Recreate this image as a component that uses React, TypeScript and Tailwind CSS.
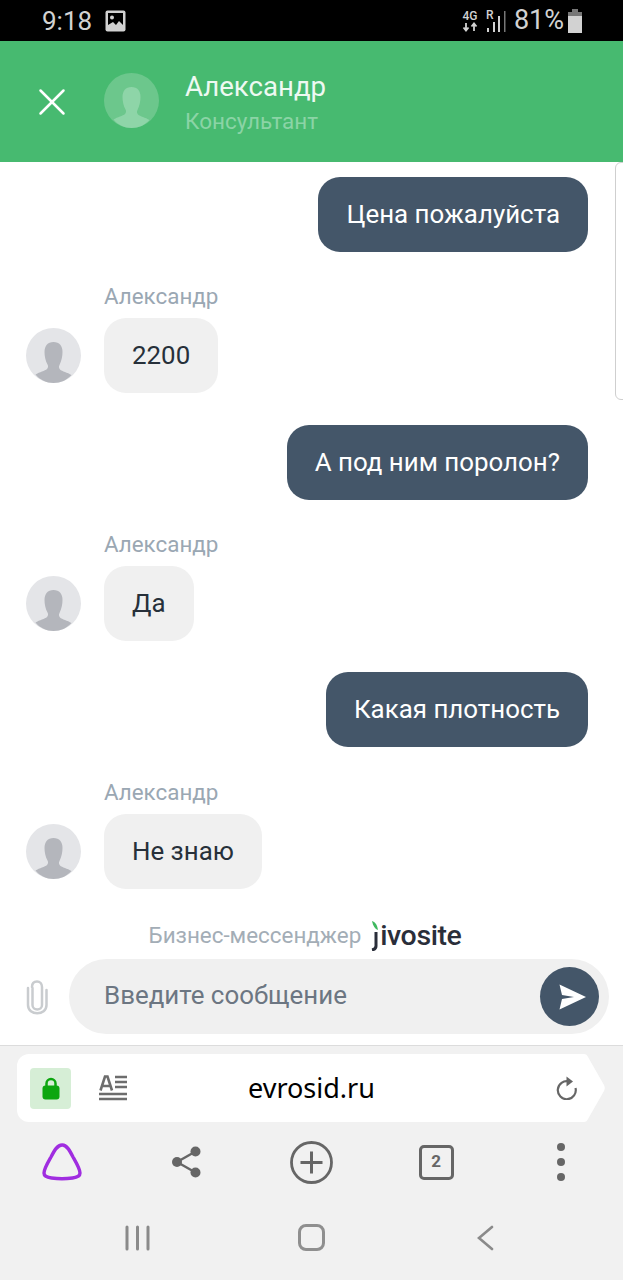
import { X } from "lucide-react";

// silhouette used in both avatars
function Avatar({ bg, fg }: { bg: string; fg: string }) {
  return (
    <svg viewBox="0 0 55 55" className="w-[55px] h-[55px] shrink-0">
      <circle cx="27.5" cy="27.5" r="27.5" fill={bg} />
      <path
        fill={fg}
        d="M27.5 14c-6 0-9 4-9 10 0 4 1 9 3 12.500 1 1.500.5 3.500-.5 4.500-2 2-7.500 3-11.500 5.500C14 52 20.500 55 27.500 55s13.500-3 18-8c-4-2.500-9.500-3.500-11.500-5.500-1-1-1.500-3-.5-4.500C35.500 33 36.500 28 36.500 24c0-6-3-10-9-10z"
      />
    </svg>
  );
}

function Outgoing({ text, className }: { text: string; className?: string }) {
  return (
    <div className={`flex justify-end pr-[35px] ${className ?? ""}`}>
      <div className="h-[75px] px-7 flex items-center rounded-[22px] bg-[#445669] text-white text-[25.900px]">
        {text}
      </div>
    </div>
  );
}

function Incoming({ text, className }: { text: string; className?: string }) {
  return (
    <div className={`pl-[26px] ${className ?? "mt-8"}`}>
      <div className="pl-[78px] h-6 mb-[10px] leading-6 text-[22.400px] text-[#9aa7b3]">Александр</div>
      <div className="flex items-center gap-[23px]">
        <Avatar bg="#e4e5e8" fg="#b4b6bc" />
        <div className="h-[75px] px-7 flex items-center rounded-[22px] bg-[#f0f0f0] text-[#27303a] text-[25.900px]">
          {text}
        </div>
      </div>
    </div>
  );
}

export default function App() {
  return (
    <div className="relative w-[623px] h-[1280px] overflow-hidden flex flex-col bg-white font-['Roboto',sans-serif]">
      {/* Status bar */}
      <div className="h-[41px] shrink-0 bg-black text-[#d2d2d2] flex items-center pl-[42px] pr-[41px]">
        <span className="text-[26px] leading-none">9:18</span>
        <svg viewBox="0 0 21 22" className="w-[21px] h-[22px] ml-[13px]">
          <rect x="0.500" y="0.500" width="20" height="21" rx="2" fill="#d2d2d2" />
          <rect x="3" y="3" width="15" height="16" fill="#000" />
          <circle cx="7" cy="7.500" r="2" fill="#d2d2d2" />
          <path d="M3 19l0-4 5-3 3 3 3-4 4 4v4z" fill="#d2d2d2" />
        </svg>
        <div className="ml-auto flex items-center">
          <div className="flex flex-col items-center text-[12px] leading-[12px] font-medium">
            <span>4G</span>
            <svg viewBox="0 0 16 10" className="w-4 h-[10px]">
              <path d="M4 1v7M1.500 5.500L4 8.500l2.500-3M12 9V2M9.500 4.500L12 1.500l2.500 3" stroke="#d2d2d2" strokeWidth="1.800" fill="none" />
            </svg>
          </div>
          <div className="relative w-[22px] h-[24px] ml-[8px] mr-[6px]">
            <span className="absolute left-0 top-0 text-[12px] leading-[12px] font-medium">R</span>
            <svg viewBox="0 0 22 24" className="absolute inset-0 w-[22px] h-[24px]">
              <rect x="1" y="19" width="2" height="4" fill="#d2d2d2" />
              <rect x="7" y="13" width="2" height="10" fill="#d2d2d2" />
              <rect x="12" y="7" width="2" height="16" fill="#d2d2d2" />
              <rect x="18" y="2" width="1.500" height="21" fill="#777" />
            </svg>
          </div>
          <span className="text-[27px] leading-none">81%</span>
          <svg viewBox="0 0 14 24" className="w-[14px] h-[24px] ml-[4px]">
            <rect x="4" y="0" width="6" height="3" fill="#777" />
            <rect x="0" y="3" width="14" height="5" fill="#777" />
            <rect x="0" y="7" width="14" height="17" fill="#d2d2d2" />
          </svg>
        </div>
      </div>

      {/* Chat header */}
      <div className="h-[121px] shrink-0 bg-[#47ba70] flex items-center pl-[29px]">
        <X className="w-[46px] h-[46px] text-white" strokeWidth={1.300} />
        <div className="ml-[29px] -mt-[2px]">
          <Avatar bg="#6cc78c" fg="#8ed5a8" />
        </div>
        <div className="ml-[26px] mt-[6px]">
          <div className="text-[27.600px] leading-[34px] text-[#eef9f2]">Александр</div>
          <div className="text-[22.500px] leading-[35px] text-[#8bd4a6]">Консультант</div>
        </div>
      </div>

      {/* Messages */}
      <div className="flex-1 pt-[15px]">
        <Outgoing text="Цена пожалуйста" />
        <Incoming text="2200" />
        <Outgoing text="А под ним поролон?" className="mt-8" />
        <Incoming text="Да" />
        <Outgoing text="Какая плотность" className="mt-[31px]" />
        <Incoming text="Не знаю" className="mt-[33px]" />

        <div className="mt-[29px] h-9 flex items-center justify-center pr-[13px]">
          <span className="text-[22.400px] text-[#a3adb6]">Бизнес-мессенджер</span>
          <svg viewBox="0 0 8 30" className="w-2 h-[30px] ml-[10px] -mt-[1px]">
            <path d="M1 0c3 1 5 3 6 9C4 8 2 5 1 0z" fill="#3fb85f" />
            <path d="M5 11v14c0 2-1.500 3.500-4 4" stroke="#2a2e3a" strokeWidth="3" fill="none" />
          </svg>
          <span className="text-[28.500px] leading-none font-medium text-[#2a2e3a] tracking-[-0.4px] ml-[1px]">ivosite</span>
        </div>

        {/* Input */}
        <div className="flex items-center mt-[5px] pl-[26px] pr-[14px]">
          <svg viewBox="0 0 22 36" className="w-[22px] h-[36px] mr-[21px] shrink-0" fill="none" stroke="#c9cccf" strokeWidth="2.500" strokeLinecap="round">
            <path d="M6.500 9v17c0 6 9.500 6 9.500 0V8c0-3-2-5.500-5-5.500S6 4 6 8" />
            <path d="M2 9v17c0 11 18.500 11 18.500 0V11" />
          </svg>
          <div className="flex-1 h-[75px] rounded-full bg-[#f0f0f0] flex items-center pl-[35px] pr-[10px]">
            <span className="text-[25.900px] text-[#6c7682] -mt-[3px]">Введите сообщение</span>
            <div className="ml-auto w-[59px] h-[59px] rounded-full bg-[#445669] flex items-center justify-center">
              <svg viewBox="0 0 28 26" className="w-7 h-[26px] ml-[5px]">
                <path d="M1.500 0.500L28 13 1.500 25.500 4 15l12-2-12-2z" fill="#fff" />
              </svg>
            </div>
          </div>
        </div>
      </div>

      {/* Browser toolbar */}
      <div className="h-[235px] shrink-0 bg-[#f1f1f1] border-t border-[#dcdcdc] flex flex-col">
        <div className="flex mt-2 ml-[17px] h-[68px]">
          <div className="w-[567px] bg-white rounded-l-[12px] flex items-center pl-[13px] relative">
            <div className="w-[41px] h-[41px] rounded-[4px] bg-[#d6eed6] flex items-center justify-center">
              <svg viewBox="0 0 18 23" className="w-[18px] h-[23px]">
                <path d="M4.500 10V6.500a4.500 4.500 0 019 0V10" stroke="#0ca60f" strokeWidth="2.500" fill="none" />
                <rect x="0.500" y="8.500" width="17" height="14" rx="3" fill="#0ca60f" />
              </svg>
            </div>
            <svg viewBox="0 0 28 26" className="w-7 h-[26px] ml-7">
              <path d="M1.500 15.500L6 1.500h2.500l4.500 14M3.500 11h7" stroke="#6d6d6d" strokeWidth="2.600" fill="none" />
              <path d="M16 2h12M16 7h12M16 12h12M0 19h28M0 24h28" stroke="#6d6d6d" strokeWidth="2.600" />
            </svg>
            <span className="absolute left-[231px] text-[27px] text-black font-['Noto_Sans',sans-serif]">evrosid.ru</span>
            <svg viewBox="0 0 22 24" className="w-[22px] h-6 ml-auto mr-[6px]" fill="none" stroke="#666" strokeWidth="2.200">
              <path d="M13 5.500A9 9 0 1019.500 12" />
              <path d="M10.500 0.500L17 5.500l-6.500 5z" fill="#666" stroke="none" />
            </svg>
          </div>
          <svg viewBox="0 0 22 68" className="w-[22px] h-[68px]">
            <path d="M0 0c2 0 3 1 4 3l16 28c1 2 1 4 0 6L4 65c-1 2-2 3-4 3z" fill="#fff" />
          </svg>
        </div>

        <div className="grid grid-cols-5 h-[80px] items-center justify-items-center">
          <svg viewBox="0 0 40 38" className="w-10 h-[38px]" fill="none">
            <path
              d="M20 2C15.500 2 12.500 7 9 14 5 21 2 26 2 30c0 3.500 3.500 4.500 7.500 5 3 .4 7.500.7 10.500.7s7.500-.3 10.500-.7c4-.5 7.500-1.500 7.500-5 0-4-3-9-7-16-3.500-7-6.500-12-10.500-12z"
              stroke="#a02de0"
              strokeWidth="3.400"
            />
          </svg>
          <svg viewBox="0 0 29 32" className="w-[29px] h-8" fill="#666">
            <circle cx="5" cy="16" r="5" />
            <circle cx="23.500" cy="5.500" r="5" />
            <circle cx="23.500" cy="26.500" r="5" />
            <path d="M5 16L23.500 5.500M5 16l18.500 10.500" stroke="#666" strokeWidth="2.500" />
          </svg>
          <svg viewBox="0 0 43 43" className="w-[43px] h-[43px]" fill="none" stroke="#666">
            <circle cx="21.500" cy="21.500" r="20" strokeWidth="2.800" />
            <path d="M10.500 21.500h22M21.500 10.500v22" strokeWidth="3" />
          </svg>
          <div className="w-[35px] h-[35px] rounded-[5px] border-[3px] border-[#666] flex items-center justify-center text-[17px] font-bold text-[#666]">
            2
          </div>
          <div className="flex flex-col gap-[7px]">
            <div className="w-2 h-2 rounded-full bg-[#666]" />
            <div className="w-2 h-2 rounded-full bg-[#666]" />
            <div className="w-2 h-2 rounded-full bg-[#666]" />
          </div>
        </div>

        {/* Android nav */}
        <div className="grid grid-cols-3 px-[51px] items-center justify-items-center h-[75px] -mt-[2px]">
          <svg viewBox="0 0 25 26" className="w-[25px] h-[26px]" stroke="#8a8a8a" strokeWidth="3" strokeLinecap="round">
            <path d="M2 2v22M12.500 2v22M23 2v22" />
          </svg>
          <div className="w-[27px] h-[27px] rounded-[8px] border-[3px] border-[#8f8f8f]" />
          <svg viewBox="0 0 17 26" className="w-[17px] h-[26px]" fill="none" stroke="#8a8a8a" strokeWidth="2.600" strokeLinecap="round">
            <path d="M15 2L2 13l13 11" />
          </svg>
        </div>
      </div>

      {/* Page scrollbar edge */}
      <div className="absolute left-[615px] top-[162px] w-3 h-[238px] rounded-l-[6px] border border-[#cfcfcf] bg-white" />
    </div>
  );
}
